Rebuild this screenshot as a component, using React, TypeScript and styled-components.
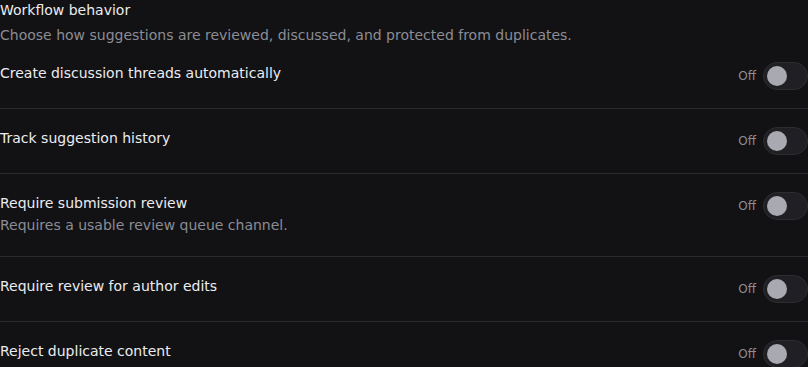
import React from "react";
import styled, { createGlobalStyle } from "styled-components";

const Global = createGlobalStyle`
  html, body {
    margin: 0;
    padding: 0;
    background: #121215;
  }
  body {
    font-family: "DejaVu Sans", "Liberation Sans", sans-serif;
    color: #ececef;
  }
`;

const Page = styled.div`
  width: 808px;
  display: flex;
  flex-direction: column;
`;

const Header = styled.header`
  display: flex;
  flex-direction: column;
  gap: 6px;
`;

const Heading = styled.h2`
  margin: 0;
  font-size: 14px;
  line-height: 20px;
  font-weight: 400;
  color: #ececef;
`;

const Description = styled.p`
  margin: 0;
  font-size: 14px;
  line-height: 18px;
  color: #8c8c94;
`;

const List = styled.div`
  display: flex;
  flex-direction: column;
`;

const Row = styled.div<{ $last?: boolean }>`
  display: flex;
  justify-content: space-between;
  align-items: flex-start;
  padding: 18px 0;
  border-bottom: ${(p) => (p.$last ? "none" : "1px solid #2a2a2f")};
`;

const Info = styled.div`
  display: flex;
  flex-direction: column;
`;

const Title = styled.div`
  font-size: 14px;
  line-height: 22px;
  color: #ececef;
`;

const Hint = styled.div`
  font-size: 14px;
  line-height: 22px;
  margin-bottom: 2px;
  color: #8c8c94;
`;

const Control = styled.div`
  display: flex;
  align-items: center;
  gap: 7px;
  height: 28px;
`;

const StateLabel = styled.span`
  font-size: 12px;
  color: #8c8c94;
`;

const Track = styled.button<{ $on?: boolean }>`
  box-sizing: border-box;
  width: 45px;
  height: 28px;
  padding: 0 3px;
  display: flex;
  align-items: center;
  justify-content: ${(p) => (p.$on ? "flex-end" : "flex-start")};
  border-radius: 14px;
  border: 1px solid #2c2c31;
  background: #202024;
  cursor: pointer;
`;

const Thumb = styled.span`
  width: 20px;
  height: 20px;
  border-radius: 50%;
  background: #a9a9b1;
`;

type Setting = { title: string; hint?: string };

const settings: Setting[] = [
  { title: "Create discussion threads automatically" },
  { title: "Track suggestion history" },
  { title: "Require submission review", hint: "Requires a usable review queue channel." },
  { title: "Require review for author edits" },
  { title: "Reject duplicate content" },
];

export default function App() {
  return (
    <>
      <Global />
      <Page>
        <Header>
          <Heading>Workflow behavior</Heading>
          <Description>
            Choose how suggestions are reviewed, discussed, and protected from duplicates.
          </Description>
        </Header>
        <List>
          {settings.map((s, i) => (
            <Row key={s.title} $last={i === settings.length - 1}>
              <Info>
                <Title>{s.title}</Title>
                {s.hint && <Hint>{s.hint}</Hint>}
              </Info>
              <Control>
                <StateLabel>Off</StateLabel>
                <Track role="switch" aria-checked={false}>
                  <Thumb />
                </Track>
              </Control>
            </Row>
          ))}
        </List>
      </Page>
    </>
  );
}
